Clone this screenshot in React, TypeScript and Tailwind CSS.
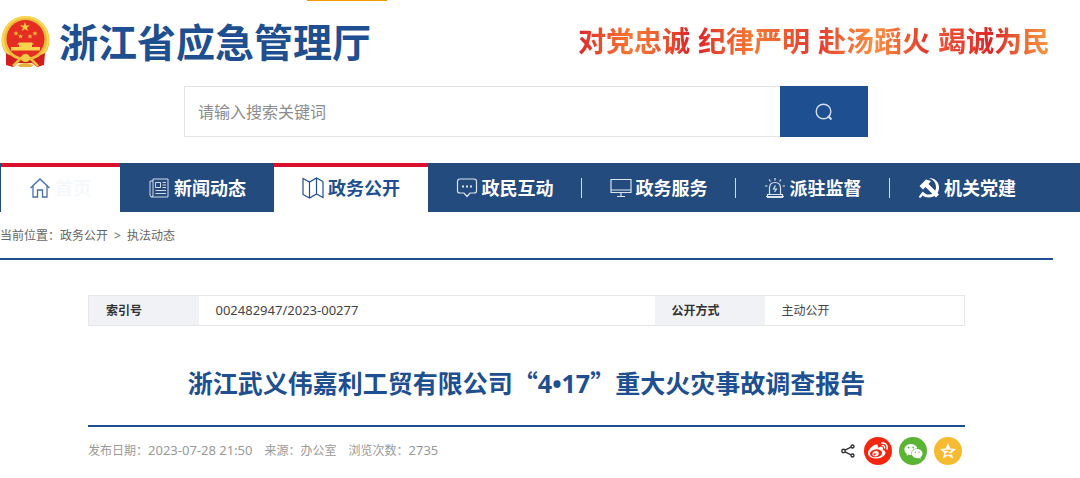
import type { ReactNode } from "react";
import { FaWeibo, FaWeixin } from "react-icons/fa";

const iconProps = {
  width: 22,
  height: 22,
  viewBox: "0 0 22 22",
  fill: "none",
  stroke: "currentColor",
  "aria-hidden": true,
};

type navType = {
  id: number;
  title: string;
  active?: boolean;
  divider?: boolean;
  icon: ReactNode;
};

const dataNav: navType[] = [
  {
    id: 1,
    title: "新闻动态",
    icon: (
      <svg {...iconProps} strokeOpacity="0.8">
        <path d="M5 2H20V20H4Q2 20 2 18V4H5M5 2V18Q5 20 3.500 20" />
        <path d="M7.500 5.500H12.500V10.500H7.500ZM14.500 5.500H18M14.500 8H18M14.500 10.500H18M7.500 13.500H18M7.500 16.500H18" />
      </svg>
    ),
  },
  {
    id: 2,
    title: "政务公开",
    active: true,
    icon: (
      <svg {...iconProps} strokeWidth="1.2">
        <path d="M1 1.500L7.500 5L14.500 1L21 4.500V20.500L14.500 17L7.500 21L1 17.500ZM7.500 5V21M14.500 1V17" />
      </svg>
    ),
  },
  {
    id: 3,
    title: "政民互动",
    divider: true,
    icon: (
      <svg {...iconProps} strokeWidth="1.2" strokeOpacity="0.85">
        <path d="M4 2H18Q20.500 2 20.500 4.500V14Q20.500 16 18 16H14L11 19.500L8 16H4Q1.500 16 1.500 14V4.500Q1.500 2 4 2Z" />
        <path d="M6 9.500H8M10 9.500H12M14 9.500H16" strokeWidth="2" />
      </svg>
    ),
  },
  {
    id: 4,
    title: "政务服务",
    divider: true,
    icon: (
      <svg {...iconProps} strokeWidth="1.2" strokeOpacity="0.85">
        <path d="M1 2.500H21V15.500H1ZM1 13H21M11 15.500V19M7 19.500H15" />
      </svg>
    ),
  },
  {
    id: 5,
    title: "派驻监督",
    divider: true,
    icon: (
      <svg {...iconProps} strokeWidth="1.2" strokeOpacity="0.85">
        <path d="M5.500 17V11Q5.500 5.500 11 5.500T16.500 11V17M3.500 17.500H18.500V20.500H3.500ZM2 19.500H20" />
        <path d="M11 1V3.500M5 2.500L6.500 4.500M17 2.500L15.500 4.500M1 9H3.500M18.500 9H21M11.500 8.500L9.500 12H12.500L10.500 15" />
      </svg>
    ),
  },
  {
    id: 6,
    title: "机关党建",
    icon: (
      <svg {...iconProps} fill="currentColor" stroke="none">
        <path d="M11 1C17 1 21 5 21 10.500C21 17 16.500 20.500 11 20.500C8 20.500 6 19.800 4.500 18.500L3 20.500Q1 21.500 1 19.500L3.500 16L5 14.500C7 17 9 17.800 11.500 17.500C15.500 17 18 14 18 10C18 5.500 15 2.500 11 1Z" />
        <path d="M1.500 9L8 2.500L13 4L10.500 7L21 17.500L18 20.500L7.500 10L5 12.500Z" />
      </svg>
    ),
  },
];

const dataSlogan = [
  {
    text: "对党忠诚",
    color: "from-[#dc2428] via-[#f77b35] to-[#dc2428]",
  },
  {
    text: "纪律严明",
    color: "from-[#dc2428] via-[#f77b35] to-[#e04030]",
  },
  {
    text: "赴汤蹈火",
    color: "from-[#e33b2e] via-[#fa9040] to-[#e02c28]",
  },
  {
    text: "竭诚为民",
    color: "from-[#ec5535] via-[#dc2428] to-[#f69a42]",
  },
];

function Emblem() {
  return (
    <svg width="50" height="54" viewBox="0 0 50 54" aria-hidden="true">
      <circle cx="25.500" cy="25" r="24" fill="#efbc3a" />
      <circle cx="25.500" cy="24.500" r="22.500" fill="none" stroke="#f9d957" strokeWidth="2" />
      <circle cx="25.500" cy="24" r="19" fill="#e52d23" />
      <path
        fill="#f7cc42"
        d="M25 7L26.200 10.400H30L27 12.600L28.100 16L25 13.900L21.900 16L23 12.600L20 10.400H23.800Z"
      />
      <g fill="#f2b93b">
        <path d="M16 16L16.800 17.500H18.500L17.200 18.700L17.700 20.500L16 19.500L14.300 20.500L14.800 18.700L13.500 17.500H15.200Z" />
        <path d="M35 16L35.800 17.500H37.500L36.200 18.700L36.700 20.500L35 19.500L33.300 20.500L33.800 18.700L32.500 17.500H34.200Z" />
        <path d="M20.500 19L21.300 20.500H23L21.700 21.700L22.200 23.500L20.500 22.500L18.800 23.500L19.300 21.700L18 20.500H19.700Z" />
        <path d="M30 19L30.800 20.500H32.500L31.200 21.700L31.700 23.500L30 22.500L28.300 23.500L28.800 21.700L27.500 20.500H29.200Z" />
      </g>
      <path
        fill="#f8d34b"
        d="M19 27.500H32L34 29.500H32V32H40V35.500H11V32H19V29.500H17Z"
      />
      <path
        fill="#cf1f1e"
        d="M6 38Q10 41 17 42L25 45L34 42Q40 41 45 38L44 50L37 52L32 48H18L13 52L6 50Z"
      />
      <path
        d="M13 51L20 44L25.500 40L31 44L38 51M12 40Q25 49 39 40"
        fill="none"
        stroke="#f3bd3d"
        strokeWidth="2.500"
      />
      <circle cx="25.500" cy="43" r="4" fill="#f6ca42" />
      <path fill="#e8b23a" d="M17 50Q25 47 34 50L31 52H20Z" />
    </svg>
  );
}

function Num({ children }: { children: ReactNode }) {
  return <span className="text-[13px]">{children}</span>;
}

export default function App() {
  return (
    <div
      className="min-h-screen bg-white text-xs text-[#444]"
      style={{ fontFamily: '"Noto Sans", "Noto Sans CJK SC", sans-serif' }}
    >
      <header>
        <div className="flex items-start justify-between pr-[30px]">
          <a href="#" className="flex items-center pt-[15px]">
            <Emblem />
            <span className="ml-[9px] text-[39px] leading-[54px] font-bold text-[#1d4f91]">
              浙江省应急管理厅
            </span>
          </a>
          <div className="mr-auto ml-[-64px] h-px w-20 bg-[#f39800]" />
          <div className="flex gap-2 pt-5 text-[28px] leading-[42px] font-bold drop-shadow-xs">
            {dataSlogan.map((item) => (
              <span
                key={item.text}
                className={`bg-linear-to-r bg-clip-text text-transparent ${item.color}`}
              >
                {item.text}
              </span>
            ))}
          </div>
        </div>
        <form className="mt-[17px] mr-[212px] ml-[184px] flex h-[51px]">
          <input
            type="text"
            aria-label="请输入搜索关键词"
            placeholder="请输入搜索关键词"
            className="min-w-0 flex-1 border border-r-0 border-[#e4e4e4] px-[13px] text-base outline-none placeholder:text-[#8c8c8c]"
          />
          <button
            type="button"
            aria-label="搜索"
            className="flex w-[88px] items-center justify-center bg-[#1d4f91] text-[#d5e0ee]"
          >
            <svg
              width="18"
              height="18"
              viewBox="0 0 18 18"
              fill="none"
              stroke="currentColor"
              strokeWidth="1.4"
            >
              <circle cx="8.500" cy="8.500" r="7.300" />
              <path d="M13 13L16.500 16.500" strokeWidth="2" />
            </svg>
          </button>
        </form>
        <nav className="mt-[26px] flex h-[49px] bg-[#234b7e] text-lg font-bold text-white">
          <a
            href="#"
            className="ml-px flex w-[119px] items-center border-t-4 border-[#d9102e] bg-white pb-1 pl-7 text-[#f6f9fc]"
          >
            <svg {...iconProps} className="mr-1 text-[#4570a8]" strokeWidth="1.3">
              <path d="M1.500 11L11 2L20.500 11M4 9V20H8.500V13H13.500V20H18V9" />
            </svg>
            首页
          </a>
          {dataNav.map((item) => (
            <a
              key={item.id}
              href="#"
              className={`flex w-[154px] items-center justify-center gap-1 border-t-4 pb-1 ${
                item.active
                  ? "border-[#d9102e] bg-white text-[#1d4f91]"
                  : "border-[#234b7e]"
              }`}
            >
              <span className="ml-auto">{item.icon}</span>
              <span className="mr-auto">{item.title}</span>
              {item.divider && <span className="-ml-1 h-5 w-px bg-[#d5dde8]" />}
            </a>
          ))}
        </nav>
      </header>

      <main>
        <div className="mr-[27px] border-b-2 border-[#1d4f91] pt-[15px] pb-[13px] leading-[18px] text-[#666]">
          当前位置：
          <a href="#">政务公开</a>
          <span className="mx-[6px]">&gt;</span>
          <a href="#">执法动态</a>
        </div>

        <article className="mt-[35px] mr-[115px] ml-[88px]">
          <table className="w-full table-fixed border border-[#e6e6e6] text-left leading-7">
            <tbody>
              <tr>
                <th className="w-[110px] bg-[#f1f2f6] pl-[17px] font-bold text-[#333]">
                  索引号
                </th>
                <td className="pl-[17px]">
                  <Num>002482947/2023-00277</Num>
                </td>
                <th className="w-[110px] bg-[#f1f2f6] pl-[17px] font-bold text-[#333]">
                  公开方式
                </th>
                <td className="w-[200px] pl-[17px]">主动公开</td>
              </tr>
            </tbody>
          </table>
          <h1 className="mt-[38px] text-center text-[25px] leading-9 font-bold text-[#1d4f91]">
            浙江武义伟嘉利工贸有限公司
            <span className="font-['Noto_Sans_CJK_SC',sans-serif]" lang="zh-CN">
              “
            </span>
            4•17
            <span className="font-['Noto_Sans_CJK_SC',sans-serif]" lang="zh-CN">
              ”
            </span>
            重大火灾事故调查报告
          </h1>
          <div className="mt-6 flex items-center justify-between border-t-2 border-[#1d4f91] pt-[10px] pr-[3px] text-[#999]">
            <div className="flex items-baseline gap-3">
              <span>
                发布日期：<Num>2023-07-28 21:50</Num>
              </span>
              <span>来源：办公室</span>
              <span>
                浏览次数：<Num>2735</Num>
              </span>
            </div>
            <div className="flex items-center gap-[7px] text-white">
              <svg
                className="mr-[2px] text-[#333]"
                width="14"
                height="14"
                viewBox="0 0 14 14"
                fill="none"
                stroke="currentColor"
                strokeWidth="1.4"
                aria-hidden="true"
              >
                <circle cx="2.500" cy="7" r="1.700" />
                <circle cx="11.500" cy="2.500" r="1.500" />
                <circle cx="11.500" cy="11.500" r="1.500" />
                <path d="M4 6.200L10 3.200M4 7.800L10 10.800" />
              </svg>
              <a
                href="#"
                aria-label="微博"
                className="flex size-7 items-center justify-center rounded-full bg-[#f5260f]"
              >
                <FaWeibo size={20} />
              </a>
              <a
                href="#"
                aria-label="微信"
                className="flex size-7 items-center justify-center rounded-full bg-[#5bb534]"
              >
                <FaWeixin size={19} />
              </a>
              <a
                href="#"
                aria-label="QQ空间"
                className="flex size-7 items-center justify-center rounded-full bg-[#f6bb31]"
              >
                <svg width="18" height="18" viewBox="0 0 18 18" aria-hidden="true">
                  <path
                    fill="currentColor"
                    d="M9 1L11.300 6.400L17 6.900L12.700 10.800L14 16.500L9 13.500L4 16.500L5.300 10.800L1 6.900L6.700 6.400Z"
                  />
                  <path
                    d="M5.500 8.300H11.500L7 12H13.500"
                    fill="none"
                    stroke="#f6bb31"
                    strokeWidth="1.3"
                  />
                </svg>
              </a>
            </div>
          </div>
        </article>
      </main>
    </div>
  );
}
